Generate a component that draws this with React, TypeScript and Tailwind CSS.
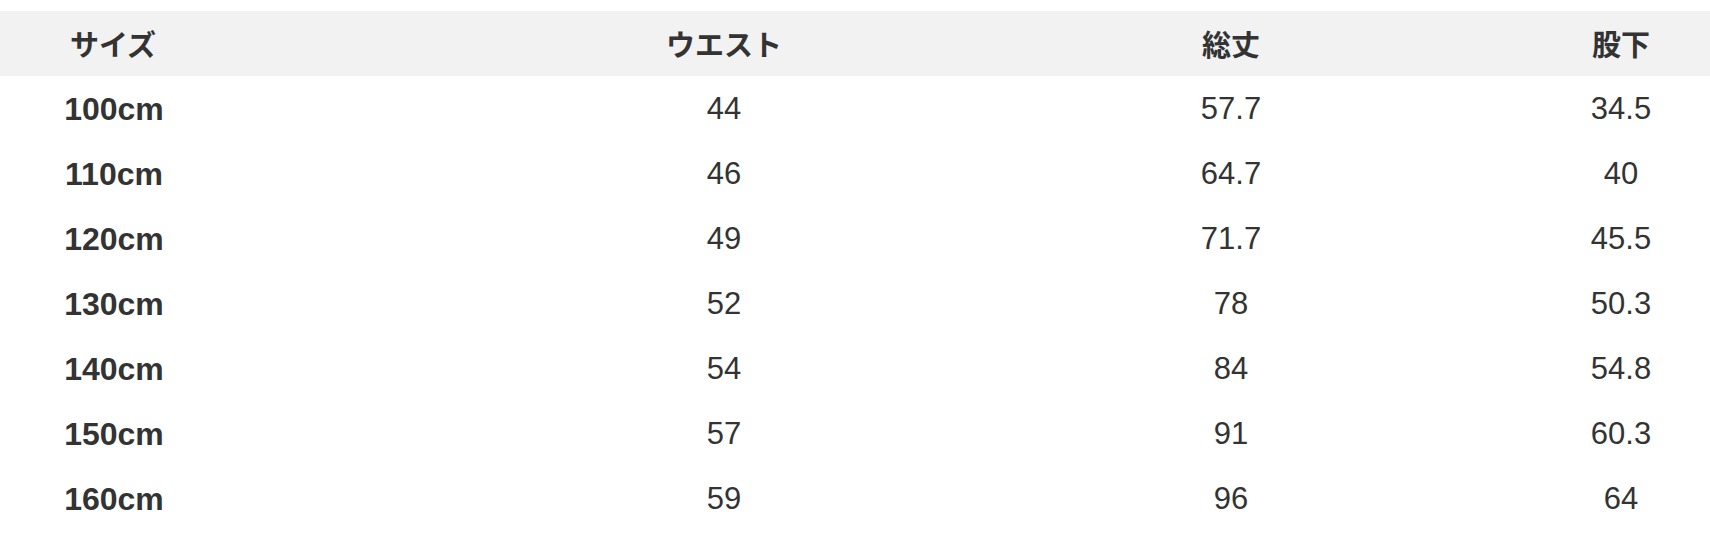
import React from "react";

const rows = [
  ["100cm", "44", "57.7", "34.5"],
  ["110cm", "46", "64.7", "40"],
  ["120cm", "49", "71.7", "45.5"],
  ["130cm", "52", "78", "50.3"],
  ["140cm", "54", "84", "54.8"],
  ["150cm", "57", "91", "60.3"],
  ["160cm", "59", "96", "64"],
];

const headers = ["サイズ", "ウエスト", "総丈", "股下"];

const jpFont = "font-['Noto_Sans_CJK_JP','Liberation_Sans',sans-serif]";
const numFont = "font-['Liberation_Sans','Noto_Sans_CJK_JP',sans-serif]";

export default function App() {
  return (
    <div className="flex h-[542px] w-[1710px] flex-col bg-white pt-[11px] text-[#333333]">
      <div className={`flex h-[65px] items-center bg-[#f2f2f2] text-[29px] font-bold leading-none ${jpFont}`}>
        <div className="w-[226px] text-center">{headers[0]}</div>
        <div className="ml-[398px] w-[200px] text-center">{headers[1]}</div>
        <div className="ml-[307px] w-[200px] text-center">{headers[2]}</div>
        <div className="ml-[201px] w-[178px] text-center">{headers[3]}</div>
      </div>
      {rows.map((r) => (
        <div key={r[0]} className={`flex h-[65px] items-center leading-none ${numFont}`}>
          <div className="w-[228px] text-center text-[32px] font-bold">{r[0]}</div>
          <div className="ml-[396px] w-[200px] text-center text-[31px]">{r[1]}</div>
          <div className="ml-[307px] w-[200px] text-center text-[31px]">{r[2]}</div>
          <div className="ml-[201px] w-[178px] text-center text-[31px]">{r[3]}</div>
        </div>
      ))}
    </div>
  );
}
